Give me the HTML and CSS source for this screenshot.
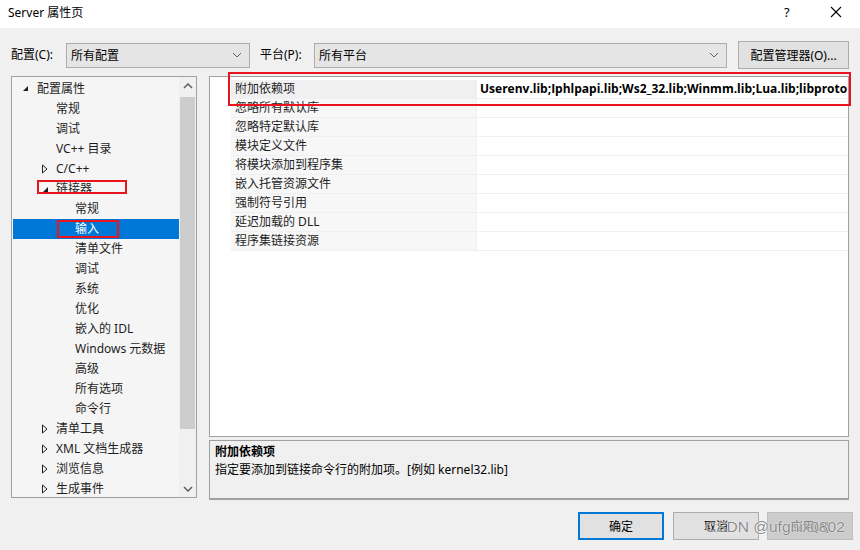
FILE: index.html
```html
<!DOCTYPE html>
<html>
<head>
<meta charset="utf-8">
<link rel="stylesheet" href="styles.css">
</head>
<body>
<div class="window">
  <div class="titlebar">
    <span class="title">Server 属性页</span>
    <span class="help">?</span>
    <span class="close"><svg width="12" height="12" viewBox="0 0 12 12"><path d="M1 1L11 11M11 1L1 11" stroke="#000" stroke-width="1.1" fill="none"/></svg></span>
  </div>
  <div class="body">
    <div class="config-row">
      <span class="lbl lbl-config">配置(C):</span>
      <div class="combo combo-config"><span>所有配置</span><svg class="chev" width="10" height="6" viewBox="0 0 10 6"><path d="M1 1L5 5L9 1" stroke="#606060" fill="none"/></svg></div>
      <span class="lbl lbl-platform">平台(P):</span>
      <div class="combo combo-platform"><span>所有平台</span><svg class="chev" width="10" height="6" viewBox="0 0 10 6"><path d="M1 1L5 5L9 1" stroke="#606060" fill="none"/></svg></div>
      <div class="btn btn-mgr">配置管理器(O)...</div>
    </div>
    <div class="main">
      <div class="tree">
        <div class="tree-list">
          <div class="node l0"><svg class="tri" width="8" height="8" viewBox="0 0 8 8"><path d="M7 2L7 7L2 7Z" fill="#1e1e1e"/></svg><span>配置属性</span></div>
          <div class="node l1"><span>常规</span></div>
          <div class="node l1"><span>调试</span></div>
          <div class="node l1"><span>VC++ 目录</span></div>
          <div class="node l1 c"><svg class="tri" width="8" height="10" viewBox="0 0 8 10"><path d="M1.5 1L6 5L1.5 9Z" fill="none" stroke="#1e1e1e"/></svg><span>C/C++</span></div>
          <div class="node l1 c"><svg class="tri" width="8" height="8" viewBox="0 0 8 8"><path d="M7 2L7 7L2 7Z" fill="#1e1e1e"/></svg><span>链接器</span></div>
          <div class="node l2"><span>常规</span></div>
          <div class="node l2 selected"><span>输入</span></div>
          <div class="node l2"><span>清单文件</span></div>
          <div class="node l2"><span>调试</span></div>
          <div class="node l2"><span>系统</span></div>
          <div class="node l2"><span>优化</span></div>
          <div class="node l2"><span>嵌入的 IDL</span></div>
          <div class="node l2"><span>Windows 元数据</span></div>
          <div class="node l2"><span>高级</span></div>
          <div class="node l2"><span>所有选项</span></div>
          <div class="node l2"><span>命令行</span></div>
          <div class="node l1 c"><svg class="tri" width="8" height="10" viewBox="0 0 8 10"><path d="M1.5 1L6 5L1.5 9Z" fill="none" stroke="#1e1e1e"/></svg><span>清单工具</span></div>
          <div class="node l1 c"><svg class="tri" width="8" height="10" viewBox="0 0 8 10"><path d="M1.5 1L6 5L1.5 9Z" fill="none" stroke="#1e1e1e"/></svg><span>XML 文档生成器</span></div>
          <div class="node l1 c"><svg class="tri" width="8" height="10" viewBox="0 0 8 10"><path d="M1.5 1L6 5L1.5 9Z" fill="none" stroke="#1e1e1e"/></svg><span>浏览信息</span></div>
          <div class="node l1 c"><svg class="tri" width="8" height="10" viewBox="0 0 8 10"><path d="M1.5 1L6 5L1.5 9Z" fill="none" stroke="#1e1e1e"/></svg><span>生成事件</span></div>
        </div>
        <div class="scrollbar">
          <div class="sb-arrow"><svg width="10" height="6" viewBox="0 0 10 6"><path d="M1 5L5 1L9 5" stroke="#606060" stroke-width="1.5" fill="none"/></svg></div>
          <div class="sb-track"><div class="sb-thumb"></div></div>
          <div class="sb-arrow"><svg width="10" height="6" viewBox="0 0 10 6"><path d="M1 1L5 5L9 1" stroke="#606060" stroke-width="1.5" fill="none"/></svg></div>
        </div>
      </div>
      <div class="right">
        <div class="grid">
          <div class="row first"><div class="name">附加依赖项</div><div class="value">Userenv.lib;Iphlpapi.lib;Ws2_32.lib;Winmm.lib;Lua.lib;libprotobuf.lib</div></div>
          <div class="row"><div class="name">忽略所有默认库</div><div class="value"></div></div>
          <div class="row"><div class="name">忽略特定默认库</div><div class="value"></div></div>
          <div class="row"><div class="name">模块定义文件</div><div class="value"></div></div>
          <div class="row"><div class="name">将模块添加到程序集</div><div class="value"></div></div>
          <div class="row"><div class="name">嵌入托管资源文件</div><div class="value"></div></div>
          <div class="row"><div class="name">强制符号引用</div><div class="value"></div></div>
          <div class="row"><div class="name">延迟加载的 DLL</div><div class="value"></div></div>
          <div class="row"><div class="name">程序集链接资源</div><div class="value"></div></div>
        </div>
        <div class="desc">
          <div class="desc-title">附加依赖项</div>
          <div class="desc-text">指定要添加到链接命令行的附加项。[例如 kernel32.lib]</div>
        </div>
      </div>
    </div>
    <div class="buttons">
      <div class="btn dlg default">确定</div>
      <div class="btn dlg">取消</div>
      <div class="btn dlg disabled">应用(A)</div>
    </div>
  </div>
  <div class="mark mark-linker"></div>
  <div class="mark mark-input"></div>
  <div class="mark mark-row"></div>
  <div class="watermark">CSDN @ufgnix0802</div>
</div>
</body>
</html>
```
FILE: styles.css
```css
* { box-sizing: border-box; }
html, body { margin: 0; padding: 0; }
body {
  width: 860px;
  height: 550px;
  overflow: hidden;
  font-family: "Noto Sans", "Noto Sans CJK SC", sans-serif;
  font-size: 12px;
  color: #000;
}
.window {
  position: relative;
  width: 860px;
  height: 550px;
  background: #f0f0f0;
}
.titlebar {
  height: 28px;
  background: #fff;
  display: flex;
  align-items: center;
  padding-left: 8px;
}
.title { font-size: 12px; line-height: 16px; flex: 1; margin-top: -3px; }
.help { width: 14px; font-size: 13px; margin-right: 32px; margin-top: -4px; }
.close { width: 12px; height: 12px; margin-right: 18px; margin-top: -5px; display: flex; }
.body { display: flex; flex-direction: column; }
.config-row {
  display: flex;
  align-items: center;
  padding: 13px 0 0 11px;
  height: 41px;
}
.lbl { line-height: 16px; }
.lbl-config { width: 55px; }
.lbl-platform { width: 54px; margin-left: 10px; }
.combo {
  height: 25px;
  background: #e5e5e5;
  border: 1px solid #adadad;
  display: flex;
  align-items: center;
  padding: 0 7px 0 4px;
  justify-content: space-between;
}
.combo-config { width: 184px; }
.combo-platform { width: 413px; }
.btn {
  display: flex;
  align-items: center;
  justify-content: center;
  background: #e1e1e1;
  border: 1px solid #adadad;
}
.btn-mgr { width: 111px; height: 28px; margin-left: 11px; }
.main {
  display: flex;
  margin-top: 7px;
  padding-left: 11px;
}
.tree {
  width: 186px;
  height: 422px;
  border: 1px solid #a0a0a0;
  background: #f5f5f5;
  display: flex;
}
.tree-list { width: 167px; padding-top: 2px; }
.node {
  height: 20px;
  display: flex;
  align-items: center;
  line-height: 16px;
  white-space: nowrap;
  color: #1e1e1e;
}
.node .tri { flex: none; }
.node.l0 { padding-left: 9px; }
.node.l0 .tri { margin-right: 8px; margin-top: -2px; }
.node.l1 { padding-left: 44px; }
.node.l1.c { padding-left: 29px; }
.node.l1.c .tri { margin-right: 7px; }
.node.l2 { padding-left: 63px; }
.node.selected {
  background: #0078d7;
  color: #fff;
  margin: 0 0 0 1px;
  padding-left: 62px;
}
.scrollbar {
  width: 17px;
  display: flex;
  flex-direction: column;
  background: #f0f0f0;
}
.sb-arrow { height: 17px; display: flex; align-items: center; justify-content: center; }
.sb-track { flex: 1; padding: 3px 1px 0 1px; }
.sb-thumb { height: 332px; background: #cdcdcd; }
.right {
  margin-left: 12px;
  width: 640px;
  display: flex;
  flex-direction: column;
}
.grid {
  height: 361px;
  border: 1px solid #a0a0a0;
  background: #fff;
  padding: 3px 0 0 21px;
}
.row {
  display: flex;
  height: 19px;
  border-bottom: 1px solid #f0f0f3;
}
.row .name {
  width: 246px;
  background: #f7f7f7;
  padding-left: 4px;
  line-height: 18px;
  border-right: 1px solid #f0f0f3;
  white-space: nowrap;
  color: #1e1e1e;
}
.row .value {
  flex: 1;
  padding-left: 3px;
  line-height: 18px;
  white-space: nowrap;
  overflow: hidden;
  font-weight: bold;
  font-family: "Open Sans", "Noto Sans CJK SC", sans-serif;
}
.row.first .name { background: #f0f0f0; }
.desc {
  margin-top: 3px;
  height: 60px;
  border: 1px solid #a0a0a0;
  border-bottom: 2px solid #a0a0a0;
  background: #f0f0f0;
  padding: 2px 0 0 5px;
}
.desc-title { font-weight: bold; line-height: 18px; }
.desc-text { line-height: 18px; }
.buttons {
  display: flex;
  justify-content: flex-end;
  padding-right: 7px;
  margin-top: 12px;
  gap: 9px;
}
.btn.dlg { width: 86px; height: 28px; }
.btn.default { border: 2px solid #0078d7; }
.btn.disabled { background: #cccccc; border-color: #bfbfbf; color: #838383; margin-left: -1px; }
.mark {
  position: absolute;
  border: 2px solid #e8141e;
}
.mark-linker { left: 37px; top: 180px; width: 90px; height: 14px; }
.mark-input { left: 57px; top: 220px; width: 62px; height: 18px; }
.mark-row { left: 228px; top: 72px; width: 623px; height: 34px; }
.watermark {
  position: absolute;
  left: 705px;
  top: 518px;
  white-space: nowrap;
  font-family: "Liberation Sans", sans-serif;
  font-size: 15.5px;
  color: rgba(105, 105, 105, 0.8);
  text-shadow: 0 0 1px #fff, 0 0 1px #fff;
}
```
